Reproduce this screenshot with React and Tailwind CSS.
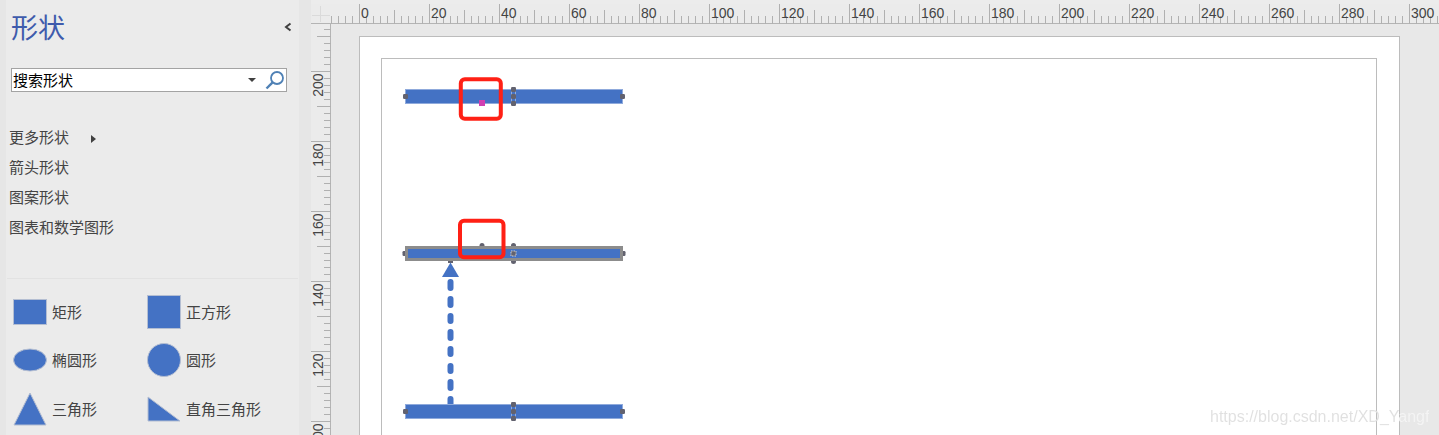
import React from "react";

const FONT = '"Noto Sans CJK SC", "Liberation Sans", sans-serif';

function range(a, b, s) {
  const r = [];
  for (let i = a; i <= b; i += s) r.push(i);
  return r;
}

function TopRuler() {
  // viewBox is in page coordinates: x 331..1439, y 4..24
  const xOf = (u) => 360 + u * 3.5;
  return (
    <svg width="1108" height="20" viewBox="331 4 1108 20" className="block">
      <line x1="331" x2="1439" y1="23.5" y2="23.5" stroke="#b4b4b4" />
      {range(-8, 310, 2).map((u) => {
        const major = u % 20 === 0;
        const mid = u % 10 === 0;
        const x = Math.round(xOf(u)) - 0.5;
        return (
          <line key={u} x1={x} x2={x} y1={major ? 4 : mid ? 10 : 16} y2="24" stroke="#b0b0b0" shapeRendering="crispEdges" />
        );
      })}
      {range(0, 300, 20).map((u) => (
        <text key={u} x={xOf(u) + 1} y="17.5" fontSize="14" fill="#444" fontFamily='"Liberation Sans", sans-serif'>
          {u}
        </text>
      ))}
    </svg>
  );
}

function SideRuler() {
  // viewBox in page coordinates: x 311..331, y 24..435
  const yOf = (v) => 71 + (200 - v) * 3.5;
  return (
    <svg width="20" height="411" viewBox="311 24 20 411" className="block">
      <line x1="330.5" x2="330.5" y1="24" y2="435" stroke="#b4b4b4" />
      {range(94, 212, 2).map((v) => {
        const major = v % 20 === 0;
        const mid = v % 10 === 0;
        const y = Math.round(yOf(v)) + 0.5;
        return (
          <line key={v} y1={y} y2={y} x1={major ? 311 : mid ? 317 : 324} x2="331" stroke="#b0b0b0" shapeRendering="crispEdges" />
        );
      })}
      {range(100, 200, 20).map((v) => (
        <text
          key={v}
          transform={`translate(323 ${yOf(v) + 2.5}) rotate(-90)`}
          textAnchor="end"
          fontSize="14"
          fill="#444"
          fontFamily='"Liberation Sans", sans-serif'
        >
          {v}
        </text>
      ))}
    </svg>
  );
}

function Handle({ x, y, fill = "#62626f", s = 5 }) {
  return <rect x={x - s / 2} y={y - s / 2} width={s} height={s} rx="1.2" fill={fill} />;
}

function MidHandles({ y1, y2, y3 }) {
  return (
    <g>
      <line x1="511.5" x2="511.5" y1={y1} y2={y3} stroke="#dfe6f4" strokeDasharray="1 1" />
      <line x1="515.5" x2="515.5" y1={y1} y2={y3} stroke="#dfe6f4" strokeDasharray="1 1" />
      <Handle x={513.5} y={y1} />
      <Handle x={513.5} y={y2} />
      <Handle x={513.5} y={y3} />
    </g>
  );
}

function Diagram() {
  const blue = "#4472c4";
  const dashes = [[282, 288], [299, 305], [316, 321], [332, 338], [349, 354], [366, 371], [382, 388], [399, 406]];
  return (
    <svg width="994" height="400" viewBox="382 59 994 400" className="block">
      {/* top bar */}
      <rect x="405.5" y="89.5" width="217" height="14" fill={blue} stroke="#8faadc" />
      <Handle x={405.5} y={96.5} />
      <Handle x={622.5} y={96.5} />
      <MidHandles y1={89.5} y2={96.5} y3={103.5} />
      <rect x="479" y="100" width="6" height="6" fill="#d03fb2" />
      <rect x="460.8" y="79.3" width="40" height="39.5" rx="4" fill="none" stroke="#ff2015" strokeWidth="4" />

      {/* middle bar */}
      <Handle x={405} y={253.5} />
      <Handle x={623} y={253.5} />
      <path d="M479.5 247v-1.5a2.5 2.5 0 0 1 5 0V247z" fill="#62626f" />
      <path d="M511 247v-1.5a2.5 2.5 0 0 1 5 0V247zM511 260v1.5a2.5 2.5 0 0 0 5 0V260z" fill="#62626f" />
      <rect x="406.5" y="247.5" width="215" height="12" fill={blue} stroke="#8c8c8c" strokeWidth="3" />
      <rect x="511" y="251" width="5" height="5" fill="#62626f" stroke="#dedede" strokeWidth="0.9" strokeDasharray="1.5 1" />
      <rect x="460" y="220.8" width="43.5" height="36.5" rx="4" fill="none" stroke="#ff2015" strokeWidth="4" />

      {/* connector */}
      <path d="M448 261h5v2h-5z" fill="#62626f" />
      <path d="M450.5 262.5L459 277H442z" fill={blue} />
      {dashes.map(([a, b]) => (
        <line key={a} x1="450.5" x2="450.5" y1={a} y2={b} stroke={blue} strokeWidth="6" strokeLinecap="round" />
      ))}

      {/* bottom bar */}
      <rect x="405.5" y="404.5" width="217" height="14" fill={blue} stroke="#8faadc" />
      <Handle x={405.5} y={411.5} />
      <Handle x={622.5} y={411.5} />
      <MidHandles y1={404.5} y2={411.5} y3={418.5} />
    </svg>
  );
}

function ShapeCell({ label, children }) {
  return (
    <div className="flex items-center h-full">
      <svg width="34" height="34" viewBox="0 0 34 34" className="block shrink-0">
        {children}
      </svg>
      <span className="ml-[5px] text-[15px] leading-[20px] text-[#444]">{label}</span>
    </div>
  );
}

function App() {
  const blue = "#4472c4";
  const edge = "#b4bed2";
  return (
    <div className="relative flex w-[1439px] h-[435px] overflow-hidden bg-[#e6e6e6]" style={{ fontFamily: FONT }}>
      <div className="w-[6px] shrink-0" />
      <aside className="w-[293px] shrink-0 bg-[#ebebeb] flex flex-col">
        <div className="flex items-center justify-between h-[54px] pl-[5px] pr-[6px]">
          <span className="text-[27px] leading-[36px] text-[#3f5bac]">形状</span>
          <svg width="10" height="10" viewBox="0 0 10 10">
            <path d="M7.5 1.5L3 5l4.5 3.5" fill="none" stroke="#404040" strokeWidth="2" />
          </svg>
        </div>
        <div className="ml-[5px] mr-[12px] mt-[14px] h-[24px] bg-white border border-[#a3a3a3] flex items-center pl-px pr-[1px] shrink-0">
          <span className="text-[15px] leading-[20px] text-black flex-1">搜索形状</span>
          <svg width="8" height="4" viewBox="0 0 8 4" className="mr-[9px]">
            <path d="M0 0h8L4 4z" fill="#404040" />
          </svg>
          <svg width="20" height="20" viewBox="0 0 20 20">
            <circle cx="12" cy="8" r="6" fill="none" stroke="#4f81b5" strokeWidth="1.8" />
            <path d="M7.6 12.4L1.5 18.5" stroke="#4f81b5" strokeWidth="2.4" />
          </svg>
        </div>
        <nav className="mt-[30px] pl-[3px] flex flex-col text-[15px] leading-[30px] text-[#444]">
          <div className="flex items-center h-[30px]">
            <span>更多形状</span>
            <svg width="5" height="8" viewBox="0 0 5 8" className="ml-[22px] mt-[3px]">
              <path d="M0 0l5 4-5 4z" fill="#404040" />
            </svg>
          </div>
          <div className="h-[30px]">箭头形状</div>
          <div className="h-[30px]">图案形状</div>
          <div className="h-[30px]">图表和数学图形</div>
        </nav>
        <div className="mt-[36px] ml-px h-px w-[291px] bg-[#e2e2e2]" />
        <div className="mt-[9px] pl-[7px] grid grid-cols-[134px_1fr] grid-rows-[48px_48px_50px]">
          <ShapeCell label="矩形">
            <rect x="0.5" y="4.5" width="33" height="25" fill={blue} stroke={edge} />
          </ShapeCell>
          <ShapeCell label="正方形">
            <rect x="0.5" y="0.5" width="33" height="33" fill={blue} stroke={edge} />
          </ShapeCell>
          <ShapeCell label="椭圆形">
            <ellipse cx="17" cy="17" rx="16.5" ry="11" fill={blue} stroke={edge} />
          </ShapeCell>
          <ShapeCell label="圆形">
            <circle cx="17" cy="17" r="16.5" fill={blue} stroke={edge} />
          </ShapeCell>
          <ShapeCell label="三角形">
            <path d="M17 1L33 33H1z" fill={blue} stroke={edge} />
          </ShapeCell>
          <ShapeCell label="直角三角形">
            <path d="M1 5L33 29H1z" fill={blue} stroke={edge} />
          </ShapeCell>
        </div>
      </aside>
      <div className="w-[12px] shrink-0" />
      <main className="flex-1 min-w-0 flex flex-col">
        <div className="h-[4px] bg-[#ececec] shrink-0" />
        <div className="flex h-[20px] shrink-0 bg-[#ebebeb]">
          <svg width="20" height="20" viewBox="0 0 20 20" className="block shrink-0">
            <path d="M9.5 2v16M1 11.5h18" stroke="#dadada" />
            <path d="M0 19.5h20" stroke="#b4b4b4" />
          </svg>
          <TopRuler />
        </div>
        <div className="flex flex-1 min-h-0">
          <div className="w-[20px] shrink-0 bg-[#ebebeb]">
            <SideRuler />
          </div>
          <div className="flex-1 min-w-0 overflow-hidden bg-[#e8e8e8] pl-[28px] pt-[12px]">
            <div className="w-[1041px] h-[500px] bg-white border border-[#bcbcbc] pl-[21px] pt-[21px]">
              <div className="w-[996px] h-[460px] border border-[#bcbcbc]">
                <Diagram />
              </div>
            </div>
          </div>
        </div>
      </main>
      <span
        className="absolute left-[1210px] top-[406px] text-[16px] leading-[22px] text-transparent bg-clip-text bg-[linear-gradient(90deg,#e0e0e0_189px,#f4f4f4_189px)] blur-[0.4px]"
        style={{ fontFamily: '"Liberation Sans", sans-serif' }}
      >
        https://blog.csdn.net/XD_Yangf
      </span>
    </div>
  );
}

export default App;
